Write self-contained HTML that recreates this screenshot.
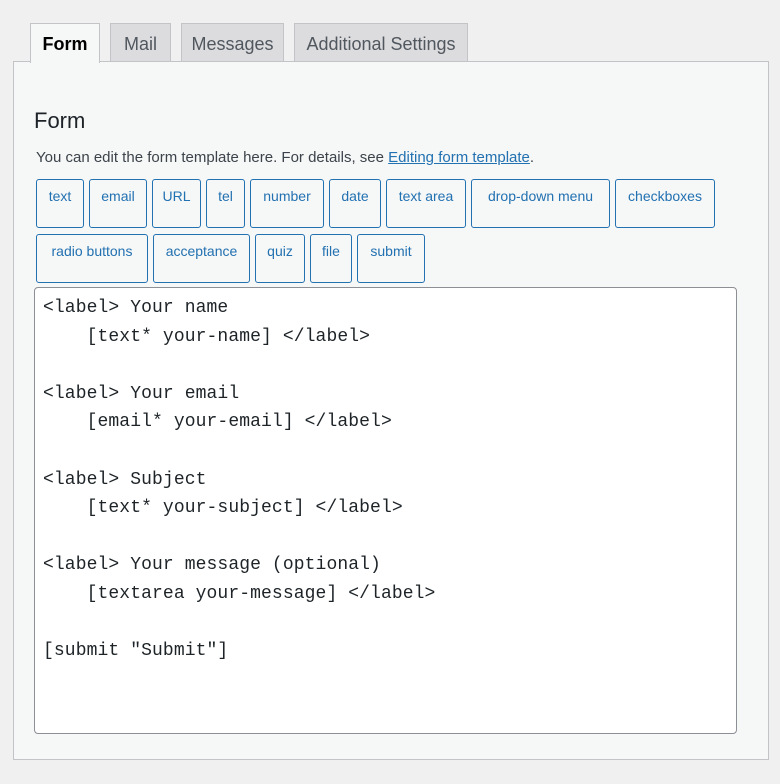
<!DOCTYPE html>
<html><head><style>
body{margin:0;width:780px;height:784px;background:#f0f0f1;font-family:"Liberation Sans",sans-serif;position:relative;overflow:hidden}
.tab{position:absolute;top:23px;height:38px;border:1px solid #c3c4c7;border-bottom:none;background:#dcdcde;color:#50575e;font-size:18px;line-height:40px;text-align:center;box-sizing:border-box}
.tab.on{background:#f6f7f7;color:#000;font-weight:bold;height:40px;z-index:2}
.panel{position:absolute;left:13px;top:61px;width:756px;height:699px;background:#f6f7f7;border:1px solid #c3c4c7;box-sizing:border-box}
h2{position:absolute;left:34px;top:108px;margin:0;font-weight:normal;font-size:22px;color:#1d2327}
.desc{position:absolute;left:36px;top:149px;font-size:15px;color:#3c434a}
.desc a{color:#2271b1}
.b{position:absolute;height:49px;border:1px solid #2271b1;border-radius:3px;box-sizing:border-box;color:#2271b1;font-size:14px;text-align:center;padding-top:8px;background:#f6f7f7}
.ta{position:absolute;left:34px;top:287px;width:703px;height:447px;background:#fff;border:1px solid #8c8f94;border-radius:4px;box-sizing:border-box;padding:6px 8px;font-family:"Liberation Mono",monospace;font-size:18px;line-height:28.6px;letter-spacing:0.1px;color:#1d2327;white-space:pre;margin:0}
</style></head><body>
<div class="tab on" style="left:30px;width:70px">Form</div>
<div class="tab" style="left:110px;width:61px">Mail</div>
<div class="tab" style="left:181px;width:103px">Messages</div>
<div class="tab" style="left:294px;width:174px">Additional Settings</div>
<div class="panel"></div>
<h2>Form</h2>
<div class="desc">You can edit the form template here. For details, see <a href="#">Editing form template</a>.</div>
<div class="b" style="left:36px;top:179px;width:48px">text</div>
<div class="b" style="left:89px;top:179px;width:58px">email</div>
<div class="b" style="left:152px;top:179px;width:49px">URL</div>
<div class="b" style="left:206px;top:179px;width:39px">tel</div>
<div class="b" style="left:250px;top:179px;width:74px">number</div>
<div class="b" style="left:329px;top:179px;width:52px">date</div>
<div class="b" style="left:386px;top:179px;width:80px">text area</div>
<div class="b" style="left:471px;top:179px;width:139px">drop-down menu</div>
<div class="b" style="left:615px;top:179px;width:100px">checkboxes</div>
<div class="b" style="left:36px;top:234px;width:112px">radio buttons</div>
<div class="b" style="left:153px;top:234px;width:97px">acceptance</div>
<div class="b" style="left:255px;top:234px;width:50px">quiz</div>
<div class="b" style="left:310px;top:234px;width:42px">file</div>
<div class="b" style="left:357px;top:234px;width:68px">submit</div>
<pre class="ta">&lt;label&gt; Your name
    [text* your-name] &lt;/label&gt;

&lt;label&gt; Your email
    [email* your-email] &lt;/label&gt;

&lt;label&gt; Subject
    [text* your-subject] &lt;/label&gt;

&lt;label&gt; Your message (optional)
    [textarea your-message] &lt;/label&gt;

[submit "Submit"]</pre>
</body></html>
